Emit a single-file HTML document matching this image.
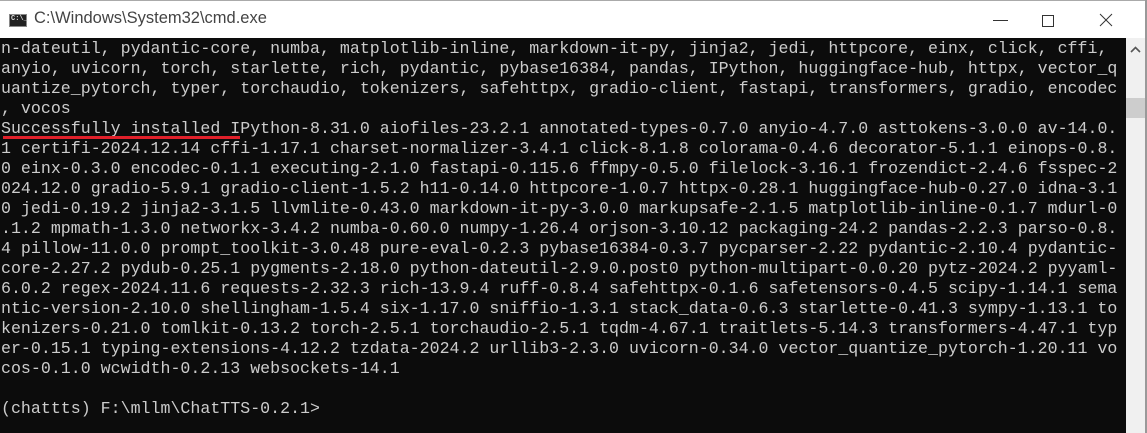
<!DOCTYPE html>
<html><head><style>
html,body{margin:0;padding:0;width:1147px;height:433px;overflow:hidden;background:#fff}
.title{position:absolute;left:0;top:0;width:1147px;height:38px;background:#fff;border-top:1px solid #aaa;box-sizing:border-box}
.title .t{position:absolute;left:34px;top:8px;font:16.5px "Liberation Sans",sans-serif;color:#444}
.icon{position:absolute;left:9px;top:13px;width:18px;height:13px;background:#222;border:1px solid #888;box-sizing:border-box}
.icon span{position:absolute;left:1px;top:0px;font:7px "Liberation Mono",monospace;color:#ddd;font-weight:bold}
.con{position:absolute;left:0;top:38px;width:1126px;height:395px;background:#0c0c0c}
pre{margin:0;position:absolute;left:1px;top:1px;font:16.6px/20px "Liberation Mono",monospace;color:#cccccc;letter-spacing:0.01px}
.sb{position:absolute;left:1126px;top:38px;width:19px;height:395px;background:#f0f0f0}
.thumb{position:absolute;left:1126px;top:98px;width:19px;height:20px;background:#cdcdcd}
.rb{position:absolute;left:1145px;top:0;width:2px;height:433px;background:#999}
.red{position:absolute;left:3px;top:136px;width:237px;height:3px;background:#e0202a}
</style></head><body>
<div class="title"><div class="icon"><span>C:\_</span></div><div class="t">C:\Windows\System32\cmd.exe</div>
<svg style="position:absolute;left:990px;top:10px" width="150" height="20">
<line x1="3" y1="9.5" x2="18" y2="9.5" stroke="#333" stroke-width="1"/>
<rect x="52.5" y="4.5" width="11" height="11" fill="none" stroke="#333"/>
<line x1="110" y1="3" x2="122" y2="15" stroke="#333"/><line x1="122" y1="3" x2="110" y2="15" stroke="#333"/>
</svg></div>
<div class="con"><pre>n-dateutil, pydantic-core, numba, matplotlib-inline, markdown-it-py, jinja2, jedi, httpcore, einx, click, cffi,
anyio, uvicorn, torch, starlette, rich, pydantic, pybase16384, pandas, IPython, huggingface-hub, httpx, vector_q
uantize_pytorch, typer, torchaudio, tokenizers, safehttpx, gradio-client, fastapi, transformers, gradio, encodec
, vocos
Successfully installed IPython-8.31.0 aiofiles-23.2.1 annotated-types-0.7.0 anyio-4.7.0 asttokens-3.0.0 av-14.0.
1 certifi-2024.12.14 cffi-1.17.1 charset-normalizer-3.4.1 click-8.1.8 colorama-0.4.6 decorator-5.1.1 einops-0.8.
0 einx-0.3.0 encodec-0.1.1 executing-2.1.0 fastapi-0.115.6 ffmpy-0.5.0 filelock-3.16.1 frozendict-2.4.6 fsspec-2
024.12.0 gradio-5.9.1 gradio-client-1.5.2 h11-0.14.0 httpcore-1.0.7 httpx-0.28.1 huggingface-hub-0.27.0 idna-3.1
0 jedi-0.19.2 jinja2-3.1.5 llvmlite-0.43.0 markdown-it-py-3.0.0 markupsafe-2.1.5 matplotlib-inline-0.1.7 mdurl-0
.1.2 mpmath-1.3.0 networkx-3.4.2 numba-0.60.0 numpy-1.26.4 orjson-3.10.12 packaging-24.2 pandas-2.2.3 parso-0.8.
4 pillow-11.0.0 prompt_toolkit-3.0.48 pure-eval-0.2.3 pybase16384-0.3.7 pycparser-2.22 pydantic-2.10.4 pydantic-
core-2.27.2 pydub-0.25.1 pygments-2.18.0 python-dateutil-2.9.0.post0 python-multipart-0.0.20 pytz-2024.2 pyyaml-
6.0.2 regex-2024.11.6 requests-2.32.3 rich-13.9.4 ruff-0.8.4 safehttpx-0.1.6 safetensors-0.4.5 scipy-1.14.1 sema
ntic-version-2.10.0 shellingham-1.5.4 six-1.17.0 sniffio-1.3.1 stack_data-0.6.3 starlette-0.41.3 sympy-1.13.1 to
kenizers-0.21.0 tomlkit-0.13.2 torch-2.5.1 torchaudio-2.5.1 tqdm-4.67.1 traitlets-5.14.3 transformers-4.47.1 typ
er-0.15.1 typing-extensions-4.12.2 tzdata-2024.2 urllib3-2.3.0 uvicorn-0.34.0 vector_quantize_pytorch-1.20.11 vo
cos-0.1.0 wcwidth-0.2.13 websockets-14.1

(chattts) F:\mllm\ChatTTS-0.2.1&gt;</pre></div>
<div class="red"></div>
<div class="sb"><svg style="position:absolute;left:4px;top:8px" width="11" height="8"><polyline points="1,6 5.5,1.5 10,6" fill="none" stroke="#555" stroke-width="1.6"/></svg></div>
<div class="thumb"></div>
<div class="rb"></div>
</body></html>
